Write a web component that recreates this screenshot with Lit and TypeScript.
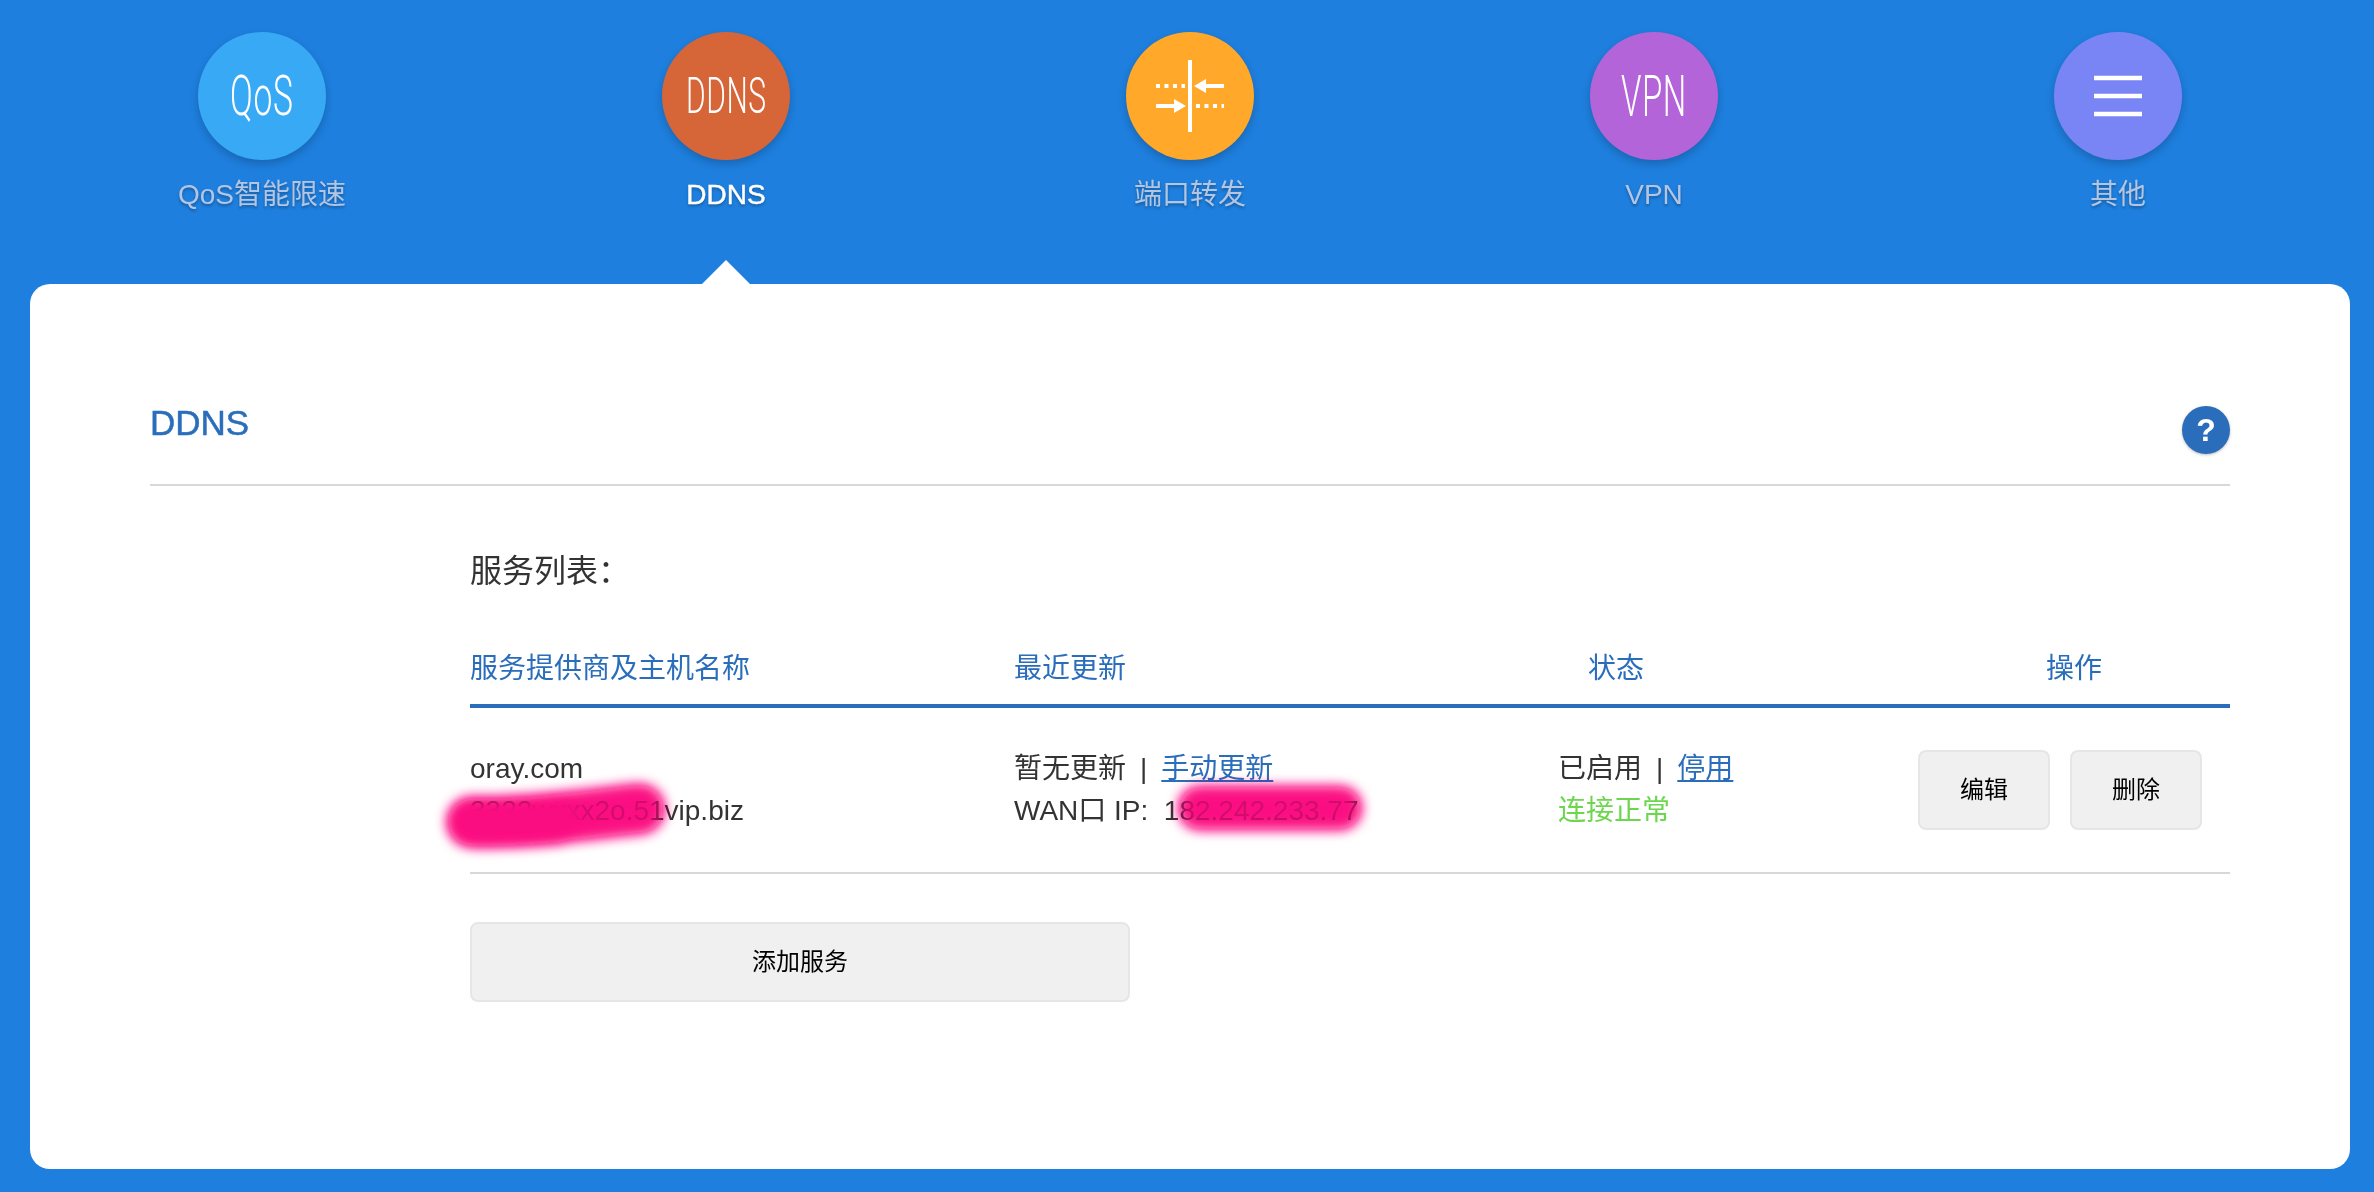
import { LitElement, html, css } from "lit";
import { customElement } from "lit/decorators.js";

const tabs = [
  { label: "QoS智能限速", cls: "qos", glyph: html`<span class="glyph g-qos">QoS</span>` },
  { label: "DDNS", cls: "ddns", active: true, glyph: html`<span class="glyph g-ddns">DDNS</span>` },
  {
    label: "端口转发",
    cls: "port",
    glyph: html`<svg class="ico" viewBox="0 0 128 128">
      <g fill="none" stroke="#fff" stroke-width="4">
        <path d="M64 28V100" />
        <path d="M30 54H59M70 74H98" stroke-dasharray="4 4.5" />
        <path d="M98 54H76M30 74H50" />
      </g>
      <path d="M68 54L80 47V61ZM60 74L48 67V81Z" fill="#fff" />
    </svg>`,
  },
  { label: "VPN", cls: "vpn", glyph: html`<span class="glyph g-vpn">VPN</span>` },
  {
    label: "其他",
    cls: "more",
    glyph: html`<svg class="ico" viewBox="0 0 128 128">
      <path d="M40 46H88M40 64H88M40 82H88" fill="none" stroke="#fff" stroke-width="4.5" />
    </svg>`,
  },
];

const smear = (cls: string, id: string) => html`<svg class="smear ${cls}" viewBox="470 708 1760 164">
  <defs>
    <filter id=${id} filterUnits="userSpaceOnUse" x="400" y="740" width="1020" height="140">
      <feGaussianBlur stdDeviation="6.5" />
    </filter>
  </defs>
  <g fill="none" stroke="#fb0a82" stroke-linecap="round" stroke-linejoin="round" filter="url(#${id})">
    <path class="soft" d="M472 822C520 824 580 815 640 809" stroke-width="46" />
    <path class="dense" d="M472 822C500 823 530 821 556 819" stroke-width="46" />
    <path class="soft" d="M1200 808H1340" stroke-width="40" />
  </g>
</svg>`;

@customElement("app-root")
export class AppRoot extends LitElement {
  static styles = css`
    :host {
      display: block;
      height: 1192px;
      overflow: hidden;
      background: #1e7fde;
      font-family: "Liberation Sans", "Noto Sans CJK SC", sans-serif;
      color: #333;
    }
    .nav {
      display: flex;
      height: 284px;
      padding: 32px 24px 0 30px;
      box-sizing: border-box;
    }
    .tab {
      flex: 1;
      display: flex;
      flex-direction: column;
      align-items: center;
      position: relative;
    }
    .circle {
      width: 128px;
      height: 128px;
      border-radius: 50%;
      display: flex;
      align-items: center;
      justify-content: center;
      box-shadow: 0 4px 8px rgba(0, 0, 0, 0.2);
      overflow: hidden;
    }
    .qos { background: #37a9f5; }
    .ddns { background: #d66537; }
    .port { background: #ffa829; }
    .vpn { background: #b364d8; }
    .more { background: #7a85f5; }
    .ico { width: 128px; height: 128px; display: block; }
    .glyph {
      display: block;
      color: #fff;
      font-family: "Roboto", sans-serif;
      font-weight: 300;
      line-height: 1;
      white-space: nowrap;
      letter-spacing: 1px;
    }
    .g-qos { font-size: 56px; transform: scaleX(0.6); }
    .g-ddns { font-size: 50px; transform: scaleX(0.6); }
    .g-vpn { font-size: 57px; transform: scaleX(0.58); }
    .label {
      margin-top: 15px;
      font-size: 28px;
      line-height: 40px;
      color: #b2c6e4;
      text-shadow: 0 2px 3px rgba(0, 0, 0, 0.3);
    }
    .tab.active .label { color: #fff; -webkit-text-stroke: 0.4px #fff; }
    .tab.active::after {
      content: "";
      position: absolute;
      left: 50%;
      bottom: 0;
      margin-left: -24px;
      border-left: 24px solid transparent;
      border-right: 24px solid transparent;
      border-bottom: 24px solid #fff;
    }
    .card {
      margin: 0 24px 0 30px;
      height: 885px;
      box-sizing: border-box;
      background: #fff;
      border-radius: 20px;
      padding: 0 120px;
    }
    .head {
      height: 202px;
      box-sizing: border-box;
      padding-top: 119px;
      border-bottom: 2px solid #d8d8d8;
      display: flex;
      justify-content: space-between;
      align-items: flex-start;
    }
    .title {
      font-size: 35px;
      line-height: 40px;
      color: #2a6ebb;
      -webkit-text-stroke: 0.5px #2a6ebb;
    }
    .help {
      margin-top: 3px;
      width: 48px;
      height: 48px;
      border-radius: 50%;
      background: #2a6ebb;
      color: #fff;
      font-size: 32px;
      font-weight: 700;
      line-height: 48px;
      text-align: center;
      box-shadow: 0 1px 3px rgba(0, 0, 0, 0.25);
    }
    .body { padding-left: 320px; }
    .sub {
      margin-top: 63px;
      font-size: 32px;
      line-height: 44px;
      color: #333;
    }
    .grid {
      display: grid;
      grid-template-columns: 544px 544px 330px 342px;
    }
    .th-row {
      margin-top: 56px;
      padding-bottom: 15px;
      border-bottom: 4px solid #2a6ebb;
      font-size: 28px;
      line-height: 40px;
      color: #2a6ebb;
    }
    .pad-status { padding-left: 30px; }
    .pad-ops { padding-left: 158px; }
    .row {
      position: relative;
      height: 166px;
      box-sizing: border-box;
      border-bottom: 2px solid #d8d8d8;
      align-items: center;
      font-size: 28px;
      line-height: 42px;
      color: #333;
    }
    .sep { margin: 0 14px; }
    a { color: #2a6ebb; text-decoration: underline; }
    .ok { color: #6cd64c; }
    .ops { display: flex; gap: 20px; padding-left: 30px; }
    button {
      font: inherit;
      font-size: 24px;
      line-height: 28px;
      color: #000;
      height: 80px;
      background: #f0f0f0;
      border: 2px solid #e6e6e6;
      border-radius: 8px;
      padding: 0;
    }
    .ops button { width: 132px; }
    .add { display: block; width: 660px; margin-top: 48px; }
    .smear {
      position: absolute;
      left: 0;
      top: 0;
      width: 1760px;
      height: 164px;
      overflow: visible;
      pointer-events: none;
    }
    .mul { mix-blend-mode: multiply; }
    .veil .soft { opacity: 0.8; }
    .veil .dense { opacity: 0.97; }
  `;

  render() {
    return html`
      <div class="nav">
        ${tabs.map(
          (t) => html`<div class="tab ${t.active ? "active" : ""}">
            <div class="circle ${t.cls}">${t.glyph}</div>
            <div class="label">${t.label}</div>
          </div>`
        )}
      </div>
      <div class="card">
        <div class="head">
          <div class="title">DDNS</div>
          <div class="help">?</div>
        </div>
        <div class="body">
          <div class="sub">服务列表：</div>
          <div class="grid th-row">
            <div>服务提供商及主机名称</div>
            <div>最近更新</div>
            <div class="pad-status">状态</div>
            <div class="pad-ops">操作</div>
          </div>
          <div class="grid row">
            <div>oray.com<br />3322wxxx2o.51vip.biz</div>
            <div>暂无更新<span class="sep">|</span><a>手动更新</a><br />WAN口 IP:&nbsp;&nbsp;182.242.233.77</div>
            <div>已启用<span class="sep">|</span><a>停用</a><br /><span class="ok">连接正常</span></div>
            <div class="ops"><button>编辑</button><button>删除</button></div>
            ${smear("mul", "s1")}${smear("veil", "s2")}
          </div>
          <button class="add">添加服务</button>
        </div>
      </div>
    `;
  }
}
